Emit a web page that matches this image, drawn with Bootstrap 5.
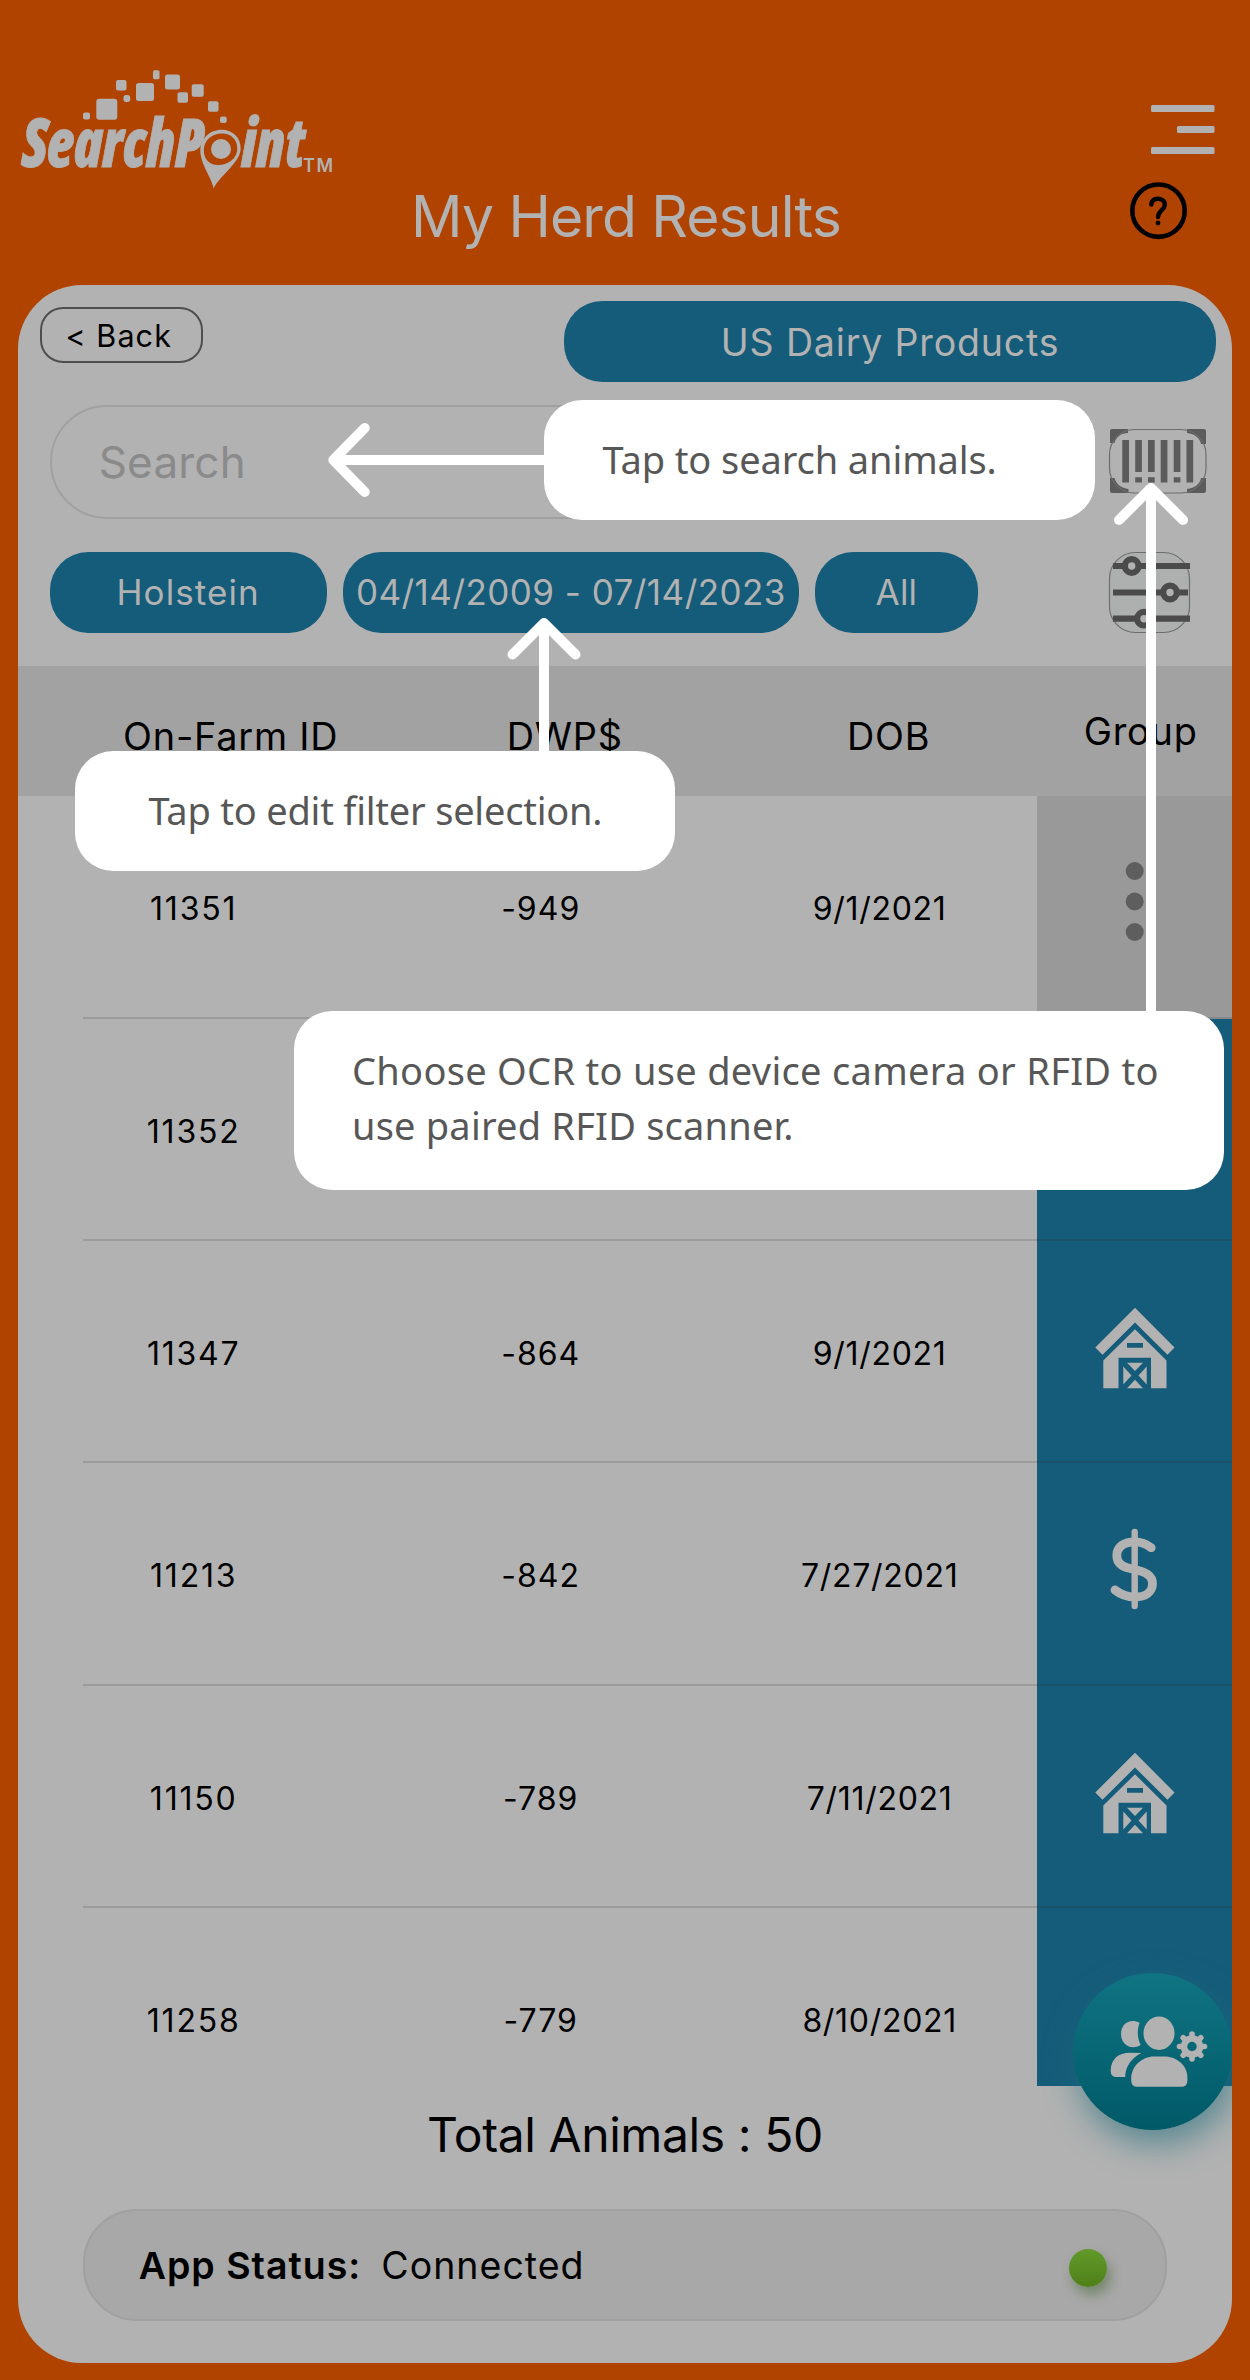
<!doctype html>
<html lang="en">
<head>
<meta charset="utf-8">
<meta name="viewport" content="width=device-width, initial-scale=1">
<title>SearchPoint - My Herd Results</title>
<link href="https://cdn.jsdelivr.net/npm/bootstrap@5.3.0/dist/css/bootstrap.min.css" rel="stylesheet">
<style>
:root{--ink:#b2b2b2;--blue:#155c7a;--orange:#b14300}
body{width:1250px;height:2380px;background:var(--orange);font-family:Inter,"Liberation Sans",sans-serif;color:#000;overflow:hidden;line-height:1.2}
svg{display:block;overflow:visible}
.brand-row{height:180px;padding:60px 36px 0 18px}
.brand-row .menu-icon{margin-top:45px}
.title-row{height:104.5px;grid-template-columns:1fr auto 1fr;padding:0 63px 0 65px}
.title-row h1{font-size:57px;font-weight:400;letter-spacing:-.85px;line-height:74px;color:var(--ink)}
.help-icon{margin-top:2px}
.panel{width:1214.5px;height:2078px;margin-left:17.7px;border-radius:64px;background:var(--ink);overflow:hidden}
.toolbar-row{height:98px;padding:16px 16px 0 22.5px}
.back-btn{width:163px;height:56px;margin-top:6.3px;border:2px solid #4e4e4e;border-radius:23px;font-size:30.5px;letter-spacing:1.1px;line-height:1.2;padding:2px 6px 0 0;color:#000}
.pill{height:81.5px;border-radius:38px;background:var(--blue);color:var(--ink);font-size:35px;white-space:nowrap}
.pill-product{width:652px;font-size:37.5px;letter-spacing:.85px;padding-top:2px}
.pill-breed{width:277px;letter-spacing:1.1px}
.pill-dates{width:456.5px;margin-left:16px;letter-spacing:.46px}
.pill-all{width:162.5px;margin-left:16px;letter-spacing:.2px}
.search-row{padding:22.5px 25px 0 32px}
.scan-icon{margin-top:24px}
.search-box{width:1025px;height:114px;border:2px solid #a0a0a0;border-radius:57px;padding-left:47px;font-size:44px;letter-spacing:.2px;color:#8a8a8a}
.filter-row{padding:32.7px 42px 0 32px;height:147px}
.herd-head{height:130.3px;background:#a2a2a2;font-size:37.8px;letter-spacing:.8px}
.herd-head>div{display:flex;justify-content:center;align-items:center;white-space:nowrap;padding-top:12px}
.herd-head>.h-group{padding-top:2px;width:98px}
.h-id{width:426px}.h-val{width:242px}.h-dob{width:406px}
.herd-list{height:1289.5px;overflow:hidden;padding-left:65px;font-size:32px}
.animal{height:222.4px}
.animal .facts{width:954.3px;border-bottom:2px solid #9b9b9b}
.animal .facts>div{padding-top:6px;text-align:center;letter-spacing:.7px}
.animal .facts>.c-val{letter-spacing:1px}
.animal .facts>.tag-id{letter-spacing:1.8px}
.c-id{width:222px}.c-val{width:472px}.c-dob{width:206px}
.group-cell{background:var(--blue);border-bottom:2px solid #1a5069}
.group-none{background:#999;border-bottom-color:#85898b}
.total-line{height:98px;font-size:48px;letter-spacing:-.42px}
.status-bar{width:1084px;height:112px;margin:25.5px 0 0 65px;border:2px solid #a0a0a0;border-radius:54px;background:#a8a8a8;font-size:37.5px;letter-spacing:1px;padding:1px 58px 0 54px}
.status-light{width:38px;height:38px;border-radius:50%;background:linear-gradient(#62992a,#4f8019);box-shadow:4px 8px 12px rgba(60,95,40,.45);margin-top:4px}
.fab-clip{position:absolute;left:1018px;top:1900px;width:214px;height:320px;overflow:hidden}
.fab{position:absolute;left:54.5px;top:72.5px;width:159px;height:157.5px;border-radius:50%;background:linear-gradient(#107483,#005967);box-shadow:4px 14px 32px rgba(30,110,125,.6)}
.tour{position:absolute;inset:0;pointer-events:none}
.tip-card{position:absolute;background:#fff;border-radius:38px;color:#575757;font-family:"Noto Sans","Liberation Sans",sans-serif;font-size:38px;white-space:nowrap}
.tip-search{left:544px;top:400px;width:551px;height:120px;padding-left:58.5px;letter-spacing:-.1px}
.tip-filter{left:75px;top:751px;width:600px;height:120px;padding-left:73.5px;letter-spacing:-.22px}
.tip-scan{left:294px;top:1011px;width:930px;height:179px;padding:32px 0 0 58px;line-height:55px;letter-spacing:.3px}
.tip-scan span{letter-spacing:.2px}
</style>
</head>
<body class="position-relative">
<header>
  <div class="brand-row d-flex justify-content-between">
    <svg width="320" height="130" viewBox="18 60 320 130" fill="#b2b2b2" font-family="'Open Sans','Noto Sans',sans-serif">
      <g>
        <rect x="83" y="112.500" width="7" height="7" rx="2"/><rect x="96.300" y="98.700" width="21" height="21" rx="3"/>
        <rect x="116" y="80" width="10.500" height="10.500" rx="2"/><rect x="123.500" y="95" width="6.700" height="7" rx="2.500"/>
        <rect x="136" y="83" width="18" height="18" rx="2.500"/><rect x="153" y="70.300" width="6.500" height="9" rx="1.500"/>
        <rect x="165" y="74.500" width="15" height="15" rx="2.500"/><rect x="177.500" y="92.300" width="10.500" height="10.500" rx="2"/>
        <rect x="191.700" y="84.300" width="12" height="12.500" rx="2"/><rect x="208" y="101.300" width="10.500" height="10.500" rx="2"/>
        <rect x="220" y="116.500" width="6.700" height="6.500" rx="2"/>
      </g>
      <g font-weight="800" font-style="italic" font-size="68" stroke="#b2b2b2" stroke-width=".8" style="font-stretch:75%">
        <text x="22" y="167" textLength="181" lengthAdjust="spacingAndGlyphs">SearchP</text>
        <text x="241.500" y="167" textLength="63" lengthAdjust="spacingAndGlyphs">int</text>
      </g>
      <path fill-rule="evenodd" d="M213.500 188.500C213 180 200 164 200.300 150C200.800 138.500 210 129.800 221.500 129.800C233 129.800 241 138 240.700 149C240 163 219.500 176 213.500 188.500ZM222 133.500C211.500 133.500 204 140.500 203.800 150C203.600 159 209.500 165 218 165C229 165 237.300 158 237.300 148.500C237.300 139.500 231 133.500 222 133.500Z"/>
      <ellipse cx="221" cy="149" rx="10" ry="10"/>
      <text x="303" y="172" font-size="18" font-weight="600" font-family="Inter,sans-serif" textLength="30">TM</text>
    </svg>
    <svg class="menu-icon" width="63.500" height="49" fill="#b2b2b2"><rect width="63.500" height="7" rx="1.500"/><rect x="26" y="21" width="37.500" height="7" rx="1.500"/><rect y="42" width="63.500" height="7" rx="1.500"/></svg>
  </div>
  <div class="title-row d-grid align-items-start">
    <span></span>
    <h1 class="m-0">My Herd Results</h1>
    <svg class="ms-auto help-icon" width="57" height="57" viewBox="0 0 57 57" fill="none" stroke="#000" stroke-linecap="round"><circle cx="28.500" cy="28.700" r="26.200" stroke-width="4.600"/><path d="M21.300 22.500C21.700 18 24.500 16.700 28 16.700C32.500 16.700 35.200 19.500 34.700 23.500C34.200 28 28 29 28 35" stroke-width="4.400"/><circle cx="28" cy="41" r="2.400" fill="#000" stroke="none"/></svg>
  </div>
</header>

<main class="panel">
  <div class="toolbar-row d-flex justify-content-between align-items-start">
    <button class="btn back-btn">&lt; Back</button>
    <div class="pill pill-product d-flex align-items-center justify-content-center">US Dairy Products</div>
  </div>
  <div class="search-row d-flex justify-content-between align-items-start">
    <div class="search-box d-flex align-items-center">Search</div>
    <svg class="scan-icon" width="98" height="64" viewBox="1109 429 98 64" fill="#5b5b5b">
      <path d="M1112 429H1128V433C1121 433 1116 437 1114.500 443H1110V431Q1110 429 1112 429ZM1187 429H1203.500Q1206 429 1206 431V444H1201C1200 438 1195 434 1187 433ZM1110 478H1114.500C1116 484 1121 488 1128.500 489V493H1112Q1110 493 1110 491ZM1201 478H1206V491Q1206 493 1203.500 493H1187V489C1195 488 1200 484 1201 478Z"/>
      <rect x="1109.500" y="429.500" width="96.500" height="63.500" rx="25" fill="none" stroke="#6d6d6d" stroke-width="1.200"/>
      <path d="M1122.300 440h6.700v42.500h-6.700zM1135.200 440h6.700v32h-6.700zM1135.200 477.300h6.700v5.200h-6.700zM1148 440h6.700v32h-6.700zM1148 477.300h6.700v5.200h-6.700zM1160.700 440h6.700v42.500h-6.700zM1173.700 440h6.700v32h-6.700zM1173.700 477.300h6.700v5.200h-6.700zM1186.500 440h6.700v42.500h-6.700z"/>
    </svg>
  </div>
  <div class="filter-row d-flex align-items-start">
    <div class="pill pill-breed d-flex align-items-center justify-content-center">Holstein</div>
    <div class="pill pill-dates d-flex align-items-center justify-content-center">04/14/2009 - 07/14/2023</div>
    <div class="pill pill-all d-flex align-items-center justify-content-center">All</div>
    <svg class="ms-auto" width="81" height="81" viewBox="1109 552 81 81" fill="none" stroke="#4b4b4b">
      <rect x="1109.500" y="552.500" width="80" height="80" rx="26" fill="#aeb0b0" stroke="#6d6d6d" stroke-width="1.200"/>
      <g stroke-width="6.200"><path d="M1113 566H1190M1113 592.500H1188M1113 618.700H1190"/><g fill="#b2b2b2"><circle cx="1131.700" cy="566" r="6.800"/><circle cx="1170" cy="592.500" r="6.800"/><circle cx="1144" cy="618.700" r="6.800"/></g></g>
    </svg>
  </div>

  <div class="herd-head d-flex">
    <div class="h-id">On-Farm ID</div><div class="h-val">DWP$</div><div class="h-dob">DOB</div><div class="h-group">Group</div>
  </div>
  <div class="herd-list">
    <div class="animal d-flex"><div class="facts d-flex align-items-center"><div class="c-id tag-id">11351</div><div class="c-val">-949</div><div class="c-dob">9/1/2021</div></div>
      <div class="group-cell group-none flex-grow-1"><svg width="195" height="220" viewBox="1037 796 195 220" fill="#5e5e5e"><circle cx="1134.700" cy="871" r="9"/><circle cx="1134.700" cy="901.500" r="9"/><circle cx="1134.700" cy="932" r="9"/></svg></div></div>
    <div class="animal d-flex"><div class="facts d-flex align-items-center"><div class="c-id tag-id">11352</div></div><div class="group-cell flex-grow-1"></div></div>
    <div class="animal d-flex"><div class="facts d-flex align-items-center"><div class="c-id tag-id">11347</div><div class="c-val">-864</div><div class="c-dob">9/1/2021</div></div>
      <div class="group-cell flex-grow-1"><svg width="195" height="220" viewBox="17 0 195 220"><use href="#barn"/></svg></div></div>
    <div class="animal d-flex"><div class="facts d-flex align-items-center"><div class="c-id tag-id">11213</div><div class="c-val">-842</div><div class="c-dob">7/27/2021</div></div>
      <div class="group-cell flex-grow-1"><svg width="195" height="220" viewBox="1037 1463 195 220" fill="none" stroke="#b2b2b2" stroke-linecap="round"><path d="M1134.700 1532V1606" stroke-width="6.400"/><path d="M1151.200 1547.700C1146.500 1544 1141 1541.800 1134.700 1541.800C1124 1541.800 1117 1547 1116.800 1555C1116.500 1565 1124.500 1567.500 1134.700 1569.500C1145 1572 1152.700 1575 1152.500 1584C1152.300 1592 1145.500 1597 1135 1597C1127 1597 1120.500 1594.500 1115 1590" stroke-width="8.800"/></svg></div></div>
    <div class="animal d-flex"><div class="facts d-flex align-items-center"><div class="c-id tag-id">11150</div><div class="c-val">-789</div><div class="c-dob">7/11/2021</div></div>
      <div class="group-cell flex-grow-1"><svg width="195" height="220" viewBox="17 0 195 220"><use href="#barn"/></svg></div></div>
    <div class="animal d-flex"><div class="facts d-flex align-items-center"><div class="c-id tag-id">11258</div><div class="c-val">-779</div><div class="c-dob">8/10/2021</div></div><div class="group-cell flex-grow-1"></div></div>
  </div>
  <div class="total-line d-flex align-items-center justify-content-center">Total Animals : 50</div>
  <div class="status-bar d-flex align-items-center"><span class="fw-semibold">App Status:</span><span style="margin-left:20px">Connected</span><span class="status-light ms-auto"></span></div>
</main>

<div class="fab-clip"><div class="fab">
  <svg width="159" height="158" viewBox="52.300 52.500 159 158" fill="#b2b2b2">
    <ellipse cx="138.300" cy="112.700" rx="15.500" ry="16.700"/>
    <path d="M110.500 160V157C111 145 122 136 133 136H144C156 136 166.700 145 166.700 157V160Q166.700 166.300 160.500 166.300H116.500Q110.500 166.300 110.500 160Z"/>
    <path d="M119 102.300C116.300 108.500 116.300 117.500 120 124.500C110 130.500 100.300 123.500 100.300 113.500C100.300 103.500 109 97.500 119 102.300Z"/>
    <path d="M120.500 132.500C110 138 104.500 147 104.500 156.500H96Q90 156.500 90 150.500C90 138.500 98 132.300 109 132.300Z"/>
    <circle cx="171.300" cy="126" r="8" fill="none" stroke="#b2b2b2" stroke-width="6.500"/>
    <path d="M171.300 113.500V117M171.300 135V138.500M158.800 126H162.300M180.300 126H183.800M162.500 117.200L165 119.700M177.600 132.300L180.100 134.800M180.100 117.200L177.600 119.700M165 132.300L162.500 134.800" stroke="#b2b2b2" stroke-width="5.600" stroke-linecap="round"/>
  </svg></div></div>

<svg class="d-none"><defs><g id="barn" fill="#b2b2b2"><path d="M115 66.700L154.500 106.500L147.500 113.700L115 81.500L82.500 113.700L75.300 106.500Z"/><path fill-rule="evenodd" d="M115 88.300L146.500 119.500V147.300H131V116.700H98.500V147.300H83.300V119.500ZM107 102V106.700H123V102Z"/><path d="M107 121.700H123L115 130ZM107 147.300H123L115 138.700ZM103.300 125.500L111.500 134.500L103.300 143.500ZM126.700 125.500L118.500 134.500L126.700 143.500Z"/></g></defs></svg>

<div class="tour">
  <svg width="1250" height="2380" fill="none" stroke="#fff" stroke-width="10" stroke-linejoin="round">
    <path d="M550 460H336M544 755V627M1151 1015V492"/>
    <path d="M364.700 428L333.300 460L364.700 492M512.500 654.500L544 623L575.500 654.500M1119 520L1151 488L1183 520" stroke-linecap="round"/>
  </svg>
  <div class="tip-card tip-search d-flex align-items-center">Tap to search animals.</div>
  <div class="tip-card tip-filter d-flex align-items-center">Tap to edit filter selection.</div>
  <div class="tip-card tip-scan">Choose OCR to use device camera or RFID to<br><span>use paired RFID scanner.</span></div>
</div>
<script src="https://cdn.jsdelivr.net/npm/bootstrap@5.3.0/dist/js/bootstrap.bundle.min.js"></script>
</body>
</html>
